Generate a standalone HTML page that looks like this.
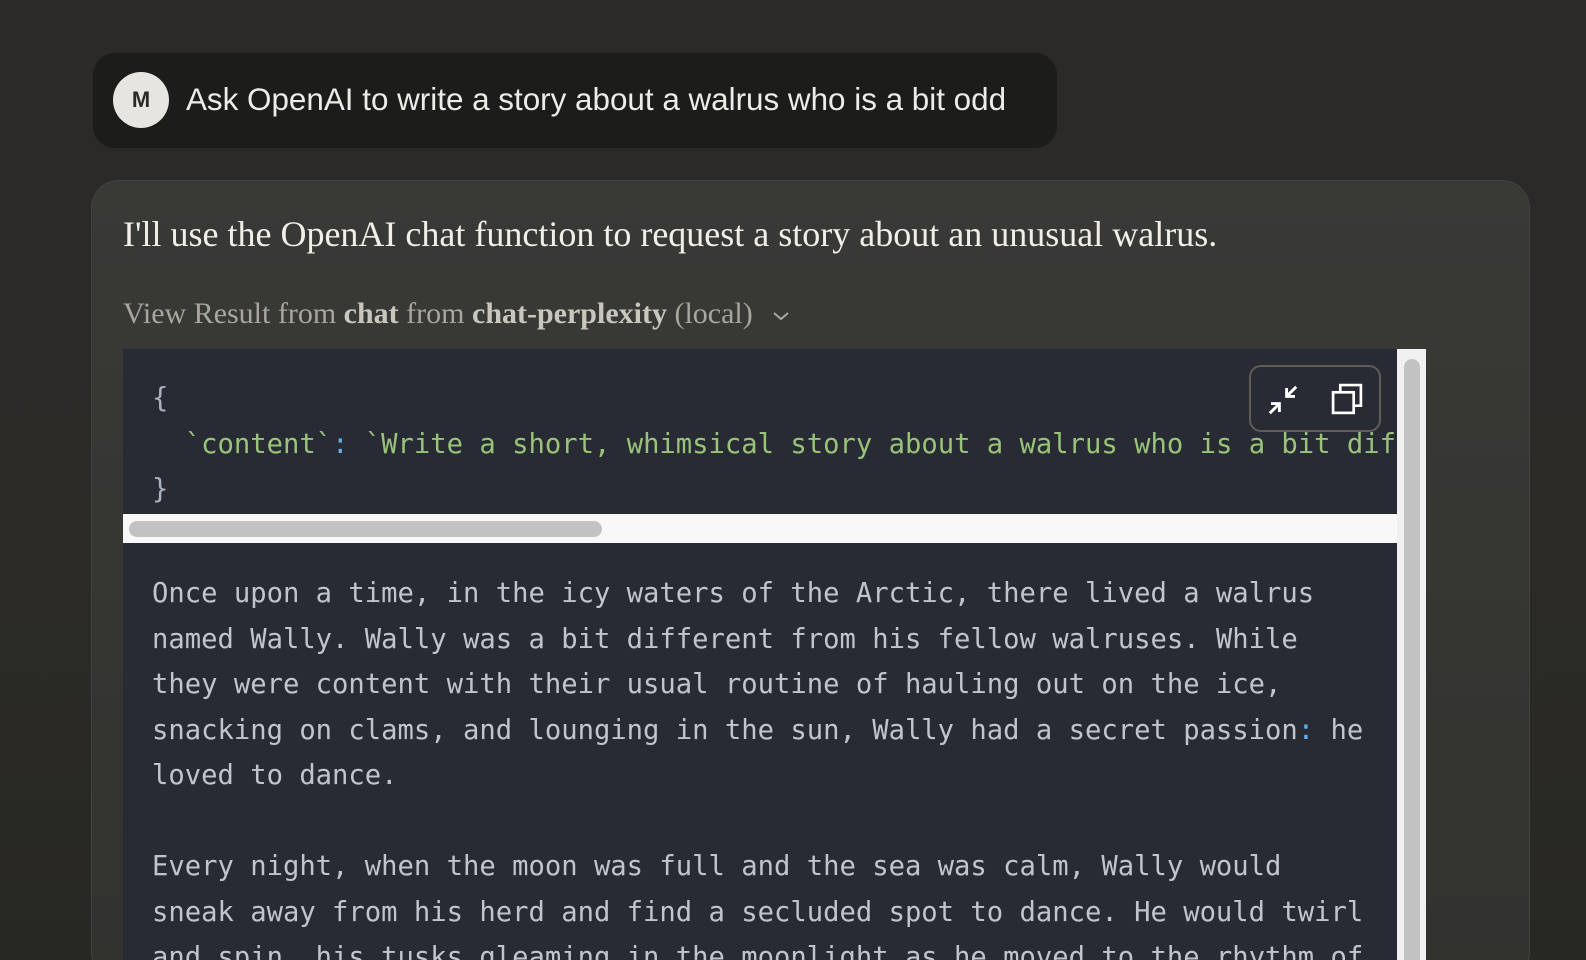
<!DOCTYPE html>
<html><head><meta charset="utf-8"><style>
*{margin:0;padding:0;box-sizing:border-box}
html,body{width:1586px;height:960px;overflow:hidden}
body{background:linear-gradient(180deg,#2b2a28 0%,#2b2a27 60%,#282823 100%);position:relative;font-family:"Liberation Sans",sans-serif}
.user{position:absolute;left:93px;top:53px;width:964px;height:95px;background:#1c1c1a;border-radius:22px}
.av{position:absolute;left:20px;top:19px;width:56px;height:56px;border-radius:50%;background:#e6e5e0;color:#2a2a28;font-weight:bold;font-size:22px;text-align:center;line-height:56px}
.utext{position:absolute;left:93px;top:29px;color:#eeece6;font-size:31.4px;line-height:36px;white-space:nowrap}
.card{position:absolute;left:91px;top:180px;width:1439px;height:800px;background:linear-gradient(180deg,#393936 0%,#32322f 100%);border:1px solid #42423e;border-radius:28px}
.t1{position:absolute;left:123px;top:214px;color:#f1efe8;font-family:"Liberation Serif",serif;font-size:36px;line-height:41px;white-space:nowrap}
.t2{position:absolute;left:123px;top:297px;color:#a9a69d;font-family:"Liberation Serif",serif;font-size:30px;line-height:34px;white-space:nowrap}
.t2 b{color:#c9c6bd}
.code{position:absolute;left:123px;top:349px;width:1274px;height:620px;background:#282b34;overflow:hidden}
.mono{font-family:"DejaVu Sans Mono","Liberation Mono",monospace;font-size:27.2px;white-space:pre;line-height:45.5px;position:absolute;left:29px}
.hbar{position:absolute;left:123px;top:514px;width:1274px;height:29px;background:#f8f8f8}
.hthumb{position:absolute;left:129px;top:521px;width:473px;height:16px;background:#c2c2c2;border-radius:8px}
.vbar{position:absolute;left:1397px;top:349px;width:29px;height:620px;background:#f1f1f1}
.vthumb{position:absolute;left:1404px;top:359px;width:16px;height:610px;background:#c2c2c2;border-radius:8px}
.btns{position:absolute;left:1249px;top:365px;width:132px;height:67px;border:2px solid #5e5d58;border-radius:12px;background:#282b34}
</style></head><body>
<div class="user"><div class="av">M</div><div class="utext">Ask OpenAI to write a story about a walrus who is a bit odd</div></div>
<div class="card"></div>
<div class="t1">I'll use the OpenAI chat function to request a story about an unusual walrus.</div>
<div class="t2">View Result from <b>chat</b> from <b>chat-perplexity</b> (local) <svg width="22" height="14" viewBox="0 0 22 14" style="margin-left:10px;vertical-align:middle"><path d="M4 4 L11 10 L18 4" stroke="#a9a69d" stroke-width="2" fill="none"/></svg></div>
<div class="code">
<div class="mono" style="top:27px;color:#abb2bf">{</div>
<div class="mono" style="top:72.5px;color:#98c379">  `content`<span style="color:#61afef">:</span> `Write a short, whimsical story about a walrus who is a bit different</div>
<div class="mono" style="top:118px;color:#abb2bf">}</div>
<div class="mono" style="top:222px;color:#c0c4cc">Once upon a time, in the icy waters of the Arctic, there lived a walrus
named Wally. Wally was a bit different from his fellow walruses. While
they were content with their usual routine of hauling out on the ice,
snacking on clams, and lounging in the sun, Wally had a secret passion<span style="color:#61afef">:</span> he
loved to dance.

Every night, when the moon was full and the sea was calm, Wally would
sneak away from his herd and find a secluded spot to dance. He would twirl
and spin, his tusks gleaming in the moonlight as he moved to the rhythm of</div>
</div>
<div class="btns">
<svg style="position:absolute;left:14px;top:15px" width="36" height="36" viewBox="0 0 30 30"><path d="M4 26 L12 18 M5 18 H12 V25 M26 4 L18 12 M18 5 V12 H25" stroke="#fff" stroke-width="2.4" fill="none"/></svg>
<svg style="position:absolute;left:79px;top:15px" width="35" height="35" viewBox="0 0 34 34"><rect x="3" y="10" width="20" height="20" stroke="#fff" stroke-width="2.6" fill="none"/><path d="M10 10 V3 H30 V23 H23" stroke="#fff" stroke-width="2.6" fill="none"/></svg>
</div>
<div class="hbar"></div><div class="hthumb"></div>
<div class="vbar"></div><div class="vthumb"></div>
</body></html>
